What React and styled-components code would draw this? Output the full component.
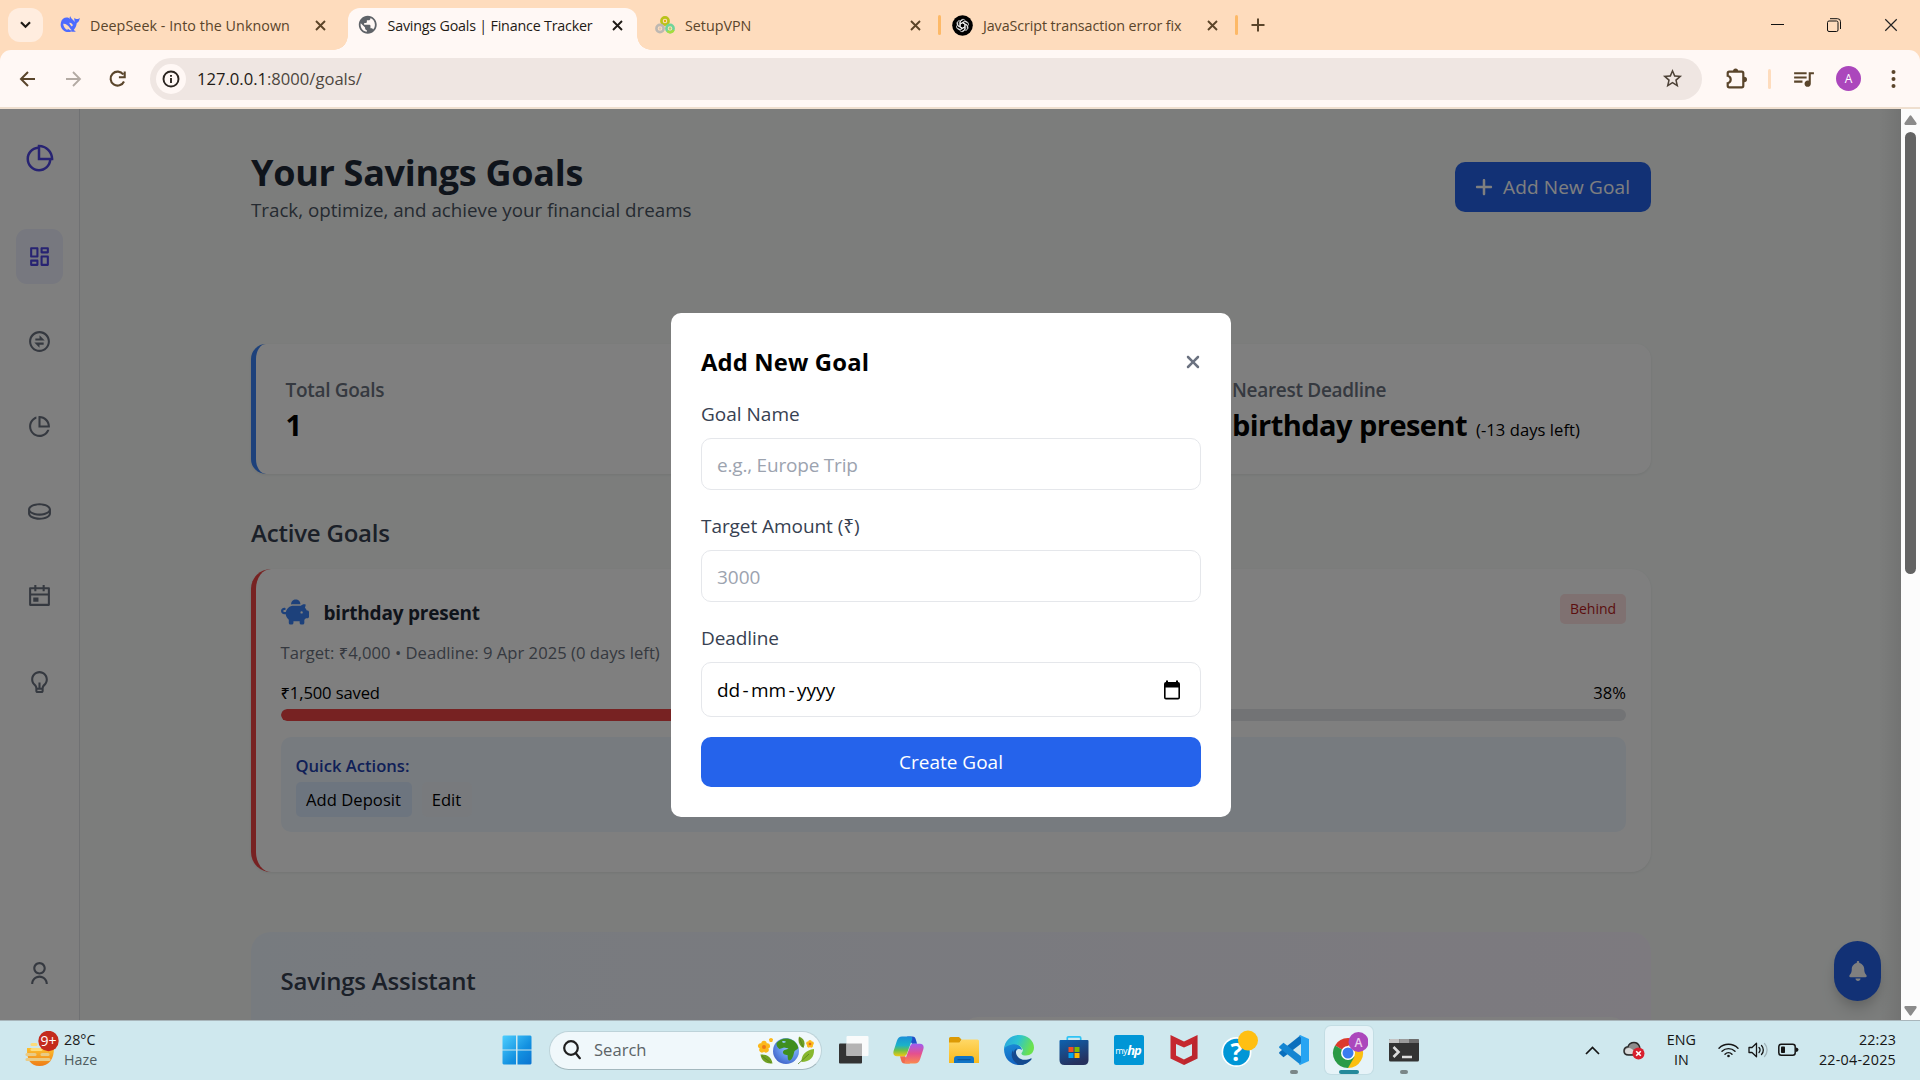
import React from "react";
import styled, { createGlobalStyle } from "styled-components";
import {
  RiPieChart2Line, RiDashboardLine, RiExchangeLine, RiPieChartLine,
  RiCoinLine, RiCalendarEventLine, RiLightbulbLine, RiUserLine,
} from "react-icons/ri";
import { FaPiggyBank, FaPlus, FaXmark, FaBell } from "react-icons/fa6";
import { MdQueueMusic, MdStarBorder, MdPublic } from "react-icons/md";

const Global = createGlobalStyle`
  * { box-sizing: border-box; }
  body { margin: 0; background: #fff; }
  body, button { font-family: "Open Sans", "Noto Sans", sans-serif; }
  button { border: 0; background: none; padding: 0; margin: 0; }
  svg { display: block; flex: none; }
`;

/* ---------- shared ---------- */

const Text = styled.span`
  display: block;
  flex: none;
  white-space: nowrap;
  font-size: ${(p) => p.$size || 19}px;
  line-height: ${(p) => p.$line || 30}px;
  font-weight: ${(p) => p.$weight || 400};
  letter-spacing: ${(p) => p.$track || 0}px;
  color: ${(p) => p.$color || "#000"};
`;

const Screen = styled.div`
  width: 1920px;
  height: 1080px;
  overflow: hidden;
  display: flex;
  flex-direction: column;
`;

/* ---------- browser chrome ---------- */

const TabStrip = styled.div`
  height: 50px;
  flex: none;
  background: #fedcbd;
  display: flex;
  align-items: flex-start;
  padding-left: 8px;
`;

const TabSearch = styled.button`
  width: 35px;
  height: 34px;
  margin: 8px 5px 0 0;
  border-radius: 12px;
  background: #ffeddf;
  display: grid;
  place-items: center;
`;

const Tab = styled.div`
  width: ${(p) => p.$w}px;
  height: 42px;
  margin-top: 8px;
  padding: 0 ${(p) => p.$pr || 12}px 8px ${(p) => p.$pl || 12}px;
  display: flex;
  align-items: center;
  gap: ${(p) => p.$gap || 10}px;
  position: relative;
  border-radius: 12px 12px 0 0;
  background: ${(p) => (p.$active ? "#fff8f5" : "transparent")};
  ${(p) => p.$active && `
    &::before, &::after {
      content: "";
      position: absolute;
      bottom: 0;
      width: 14px;
      height: 14px;
    }
    &::before {
      left: -14px;
      background: radial-gradient(circle at 0 0, transparent 13.5px, #fff8f5 14px);
    }
    &::after {
      right: -14px;
      background: radial-gradient(circle at 100% 0, transparent 13.5px, #fff8f5 14px);
    }
  `}
`;

const TabTitle = styled(Text)`
  flex: 1;
  padding-top: 1px;
`;

const TabDivider = styled.div`
  width: 3px;
  height: 20px;
  margin-top: 15px;
  border-radius: 2px;
  background: #fdb967;
`;

const NewTab = styled.button`
  margin: 18px 0 0 13px;
`;

const WindowControls = styled.div`
  margin-left: auto;
  height: 50px;
  display: flex;
  align-items: center;
  padding-right: 1px;
`;

const WindowButton = styled.button`
  width: 56.5px;
  height: 50px;
  display: grid;
  place-items: center;
`;

const ToolbarBack = styled.div`
  background: #fedcbd;
  flex: none;
`;

const Toolbar = styled.div`
  height: 59px;
  background: #fff8f5;
  border-bottom: 2px solid #efdfcf;
  border-radius: 11px 11px 0 0;
  display: flex;
  align-items: center;
  padding: 0 23px 0 18px;
`;

const NavButtons = styled.div`
  display: flex;
  gap: 25px;
  width: 132px;
`;

const AddressBar = styled.div`
  width: 1552px;
  height: 42px;
  border-radius: 21px;
  background: #efe6e2;
  display: flex;
  align-items: center;
  padding: 0 18px 0 6px;
`;

const SiteInfo = styled.div`
  width: 30px;
  height: 30px;
  margin-right: 11px;
  border-radius: 50%;
  background: #fff8f5;
  display: grid;
  place-items: center;
`;

const AddressText = styled(Text)`
  flex: 1;
  padding-top: 1px;
`;

const ToolbarActions = styled.div`
  flex: 1;
  display: flex;
  align-items: center;
  gap: 20px;
  padding-left: 24px;
`;

const ActionDivider = styled.div`
  width: 3px;
  height: 20px;
  border-radius: 2px;
  background: #fedcbd;
`;

const Avatar = styled.div`
  width: 25px;
  height: 25px;
  border-radius: 50%;
  background: #ab47bc;
  display: grid;
  place-items: center;
`;

const MenuDots = styled.div`
  margin-left: 10px;
`;

/* ---------- page ---------- */

const Viewport = styled.div`
  height: 911px;
  flex: none;
  display: flex;
  position: relative;
  overflow: hidden;
`;

const Sidebar = styled.nav`
  width: 80px;
  background: #fff;
  border-right: 1px solid #e0e3e6;
  display: flex;
  flex-direction: column;
  align-items: center;
  padding: 35px 0 19px;
`;

const Logo = styled.div`
  color: #4f46e5;
  margin: 0 1px 55px 0;
`;

const NavList = styled.div`
  flex: 1;
  display: flex;
  flex-direction: column;
  gap: 30px;
`;

const NavItem = styled.div`
  width: 47px;
  height: 55px;
  border-radius: 11px;
  display: grid;
  place-items: center;
  color: ${(p) => (p.$active ? "#4f46e5" : "#6b7280")};
  background: ${(p) => (p.$active ? "#eef1ff" : "transparent")};
`;

const Main = styled.main`
  flex: 1;
  background: #f8fbf9;
  padding: 42px 250px 0 171px;
  overflow: hidden;
`;

const PageHeader = styled.header`
  height: 74px;
  display: flex;
  justify-content: space-between;
  align-items: flex-start;
`;

const PageTitle = styled(Text)`
  margin: 0;
`;

const AddGoalButton = styled.button`
  width: 196px;
  height: 50px;
  margin-top: 11px;
  border-radius: 10px;
  background: #2563eb;
  color: #fff;
  display: flex;
  align-items: center;
  gap: 9px;
  padding-left: 19px;
`;

const Stats = styled.section`
  height: 130px;
  margin-top: 119px;
  background: #fff;
  border-left: 5px solid #3b82f6;
  border-radius: 15px;
  box-shadow: 0 1px 3px rgba(0, 0, 0, 0.08);
  padding: 31px 30px 0 29.5px;
  display: grid;
  grid-template-columns: 946.5px 1fr;
`;

const StatValue = styled.div`
  display: flex;
  align-items: baseline;
  gap: 9px;
`;

const SectionTitle = styled(Text)`
  margin: 40px 0 17px;
`;

const GoalCard = styled.section`
  height: 303px;
  background: #fff;
  border-left: 5px solid #ef4444;
  border-radius: 20px;
  box-shadow: 0 1px 3px rgba(0, 0, 0, 0.08);
  padding: 25px 25px 0 24.5px;
`;

const GoalHead = styled.div`
  height: 46px;
  display: flex;
  justify-content: space-between;
  align-items: flex-start;
`;

const GoalName = styled.div`
  height: 37px;
  display: flex;
  align-items: center;
  gap: 15px;
  color: #3b82f6;
`;

const PigIcon = styled(FaPiggyBank)`
  margin-bottom: 2px;
`;

const Badge = styled.div`
  width: 66px;
  height: 30px;
  border-radius: 5px;
  background: #fee2e2;
  display: grid;
  place-items: center;
`;

const ProgressLabels = styled.div`
  display: flex;
  justify-content: space-between;
  margin-top: 14.5px;
`;

const Track = styled.div`
  height: 12.5px;
  margin-top: 4px;
  border-radius: 7px;
  background: #e5e7eb;
  overflow: hidden;
`;

const Fill = styled.div`
  height: 100%;
  border-radius: 7px;
  background: #ef4444;
`;

const QuickActions = styled.div`
  height: 95px;
  margin-top: 15.5px;
  border-radius: 10px;
  background: #eff6ff;
  padding: 16px 15px;
`;

const ActionRow = styled.div`
  display: flex;
  gap: 10px;
  margin-top: 4px;
`;

const ActionButton = styled.button`
  height: 35px;
  border-radius: 5px;
  padding: 0 9px;
  min-width: ${(p) => p.$w}px;
  background: ${(p) => p.$bg};
  display: flex;
  align-items: center;
  justify-content: center;
`;

const Assistant = styled.section`
  margin-top: 60px;
  border-radius: 20px;
  background: linear-gradient(to right, #eff6ff, #faf5ff);
  padding: 33px 25px 0 29.5px;
`;

const AssistantGrid = styled.div`
  display: grid;
  grid-template-columns: 1fr 663px;
  margin-top: 21px;
`;

const AssistantPanel = styled.div`
  grid-column: 2;
  height: 200px;
  border-radius: 15px;
  background: #fff;
`;

const NotifyButton = styled.button`
  position: absolute;
  left: 1834px;
  top: 832px;
  width: 47px;
  height: 60px;
  border-radius: 24px;
  background: #2563eb;
  color: #fff;
  box-shadow: 0 12px 18px -4px rgba(0, 0, 0, 0.16), 0 4px 8px rgba(0, 0, 0, 0.08);
  display: grid;
  place-items: center;
`;

const Overlay = styled.div`
  position: absolute;
  inset: 0 19px 0 0;
  background: linear-gradient(to left, rgba(0, 0, 0, 0.08), transparent 22px), rgba(0, 0, 0, 0.5);
  display: flex;
  align-items: center;
  justify-content: center;
`;

const Modal = styled.div`
  width: 560px;
  height: 504px;
  margin-left: 1px;
  background: #fff;
  border-radius: 10px;
  padding: 30px;
`;

const ModalHead = styled.div`
  height: 37px;
  display: flex;
  justify-content: space-between;
  align-items: center;
  margin: 1px -2px 18px 0;
  color: #6b7280;
`;

const Field = styled.label`
  display: block;
  margin-bottom: ${(p) => p.$mb || 21}px;
`;

const InputBox = styled.div`
  height: ${(p) => p.$h || 52}px;
  margin-top: 9px;
  border: 1px solid #e5e7eb;
  border-radius: 10px;
  padding: 2px 20px 0 15px;
  display: flex;
  align-items: center;
  justify-content: space-between;
`;

const DateSeparator = styled.span`
  margin: 0 2.3px;
`;

const SubmitButton = styled.button`
  width: 100%;
  height: 50px;
  border-radius: 10px;
  background: #2563eb;
  display: grid;
  place-items: center;
  padding-top: 1px;
`;

const Scrollbar = styled.div`
  width: 19px;
  background: #fcfcfc;
  display: flex;
  flex-direction: column;
  align-items: center;
  padding: 6px 0 4px;
`;

const ScrollThumb = styled.div`
  width: 11px;
  height: 442px;
  margin: 7px 0 auto;
  border-radius: 6px;
  background: #636363;
`;

/* ---------- taskbar ---------- */

const Taskbar = styled.div`
  height: 60px;
  flex: none;
  border-top: 1px solid #a9b6bb;
  background: #cfe8ee;
  display: flex;
  align-items: center;
  padding-bottom: 1px;
`;

const Weather = styled.div`
  width: 489px;
  display: flex;
  align-items: center;
  padding-left: 24px;
  gap: 3px;
`;

const Lines = styled.div`
  display: flex;
  flex-direction: column;
  align-items: ${(p) => p.$align || "flex-start"};
`;

const TaskSlot = styled.div`
  width: 55px;
  height: 58px;
  display: grid;
  place-items: center;
  position: relative;
`;

const ActiveSlot = styled.div`
  width: 48px;
  height: 48px;
  border-radius: 6px;
  background: #e6f3f8;
  box-shadow: 0 0 0 1px rgba(150, 180, 190, 0.2);
  display: grid;
  place-items: center;
`;

const Indicator = styled.div`
  position: absolute;
  bottom: 5px;
  left: 50%;
  width: ${(p) => (p.$active ? 20 : 8)}px;
  height: 4px;
  border-radius: 2px;
  transform: translateX(-50%);
  background: ${(p) => (p.$active ? "#25899a" : "#7a8688")};
`;

const SearchPill = styled.div`
  width: 273px;
  height: 39px;
  margin: 0 4px 0 5px;
  border-radius: 20px;
  background: #f0f8fb;
  border: 1px solid #bdd3d9;
  border-bottom-color: #a3b8be;
  display: flex;
  align-items: center;
  padding: 0 6px 0 13px;
`;

const SearchLabel = styled(Text)`
  flex: 1;
  margin-left: 13px;
`;

const HpTile = styled.div`
  width: 30px;
  height: 30px;
  border-radius: 2px;
  background: #0096d6;
  color: #fff;
  display: flex;
  align-items: center;
  justify-content: center;
  font-size: 9px;
  letter-spacing: -0.4px;
  b { font-size: 13px; font-style: italic; letter-spacing: -1px; padding-right: 1px; }
`;

const Tray = styled.div`
  margin-left: auto;
  height: 58px;
  display: flex;
  align-items: center;
  padding-right: 24px;
`;

const TrayItem = styled.div`
  margin-right: ${(p) => p.$mr}px;
`;

/* ---------- drawings ---------- */

const Cross = ({ size = 11, color = "#5b4428", width = 1.9 }) => (
  <svg width={size} height={size} viewBox="0 0 11 11" fill="none" stroke={color} strokeWidth={width}>
    <path d="M1 1l9 9M10 1l-9 9" />
  </svg>
);

const Whale = () => (
  <svg width="20" height="18" viewBox="0 0 20 18">
    <path fill="#4d6bfe" d="M1 6.2C1.6 3 4.6 1 7.6 1.500c1 .2 1.500.8 2.600 1.700C9 1.800 9.900.5 10.500.2c.2 1.800 1.300 2.500 2.300 3.600 1.200 1.300 1.700 2 2.400 1.900-1-1.100-1-2.400-.8-4 .8 1.200 2 1.500 3 1.400 1 0 1.600-.5 2.300-1-.1 2.600-1.200 4.200-3 5.200-.3 3-1.400 5-3 6.700.7.600 1.600.9 2.200 1.200-1.400.8-3 .7-4.600.2C7 17.500 2.200 14.700.9 10.500.5 9 .7 7.500 1 6.200z" />
    <path fill="#fedcbd" d="M3.200 7.800c2.600-.2 5.200 1.600 6.500 4 .6 1 1.200 1.900 2.200 2.400-1.700.3-3-.5-4-1.500l-.6 1.300C5 13 3.400 10.600 3.200 7.800zM9.300 6.900c1.500-.3 3 .7 3.600 2.300l-1.100 1.300C10.700 9.600 10 8.200 9.300 6.900z" />
  </svg>
);

const Puzzle = ({ color }) => (
  <svg width="22" height="22" viewBox="0 0 22 22">
    <path fill="none" stroke={color} strokeWidth="2.200" d="M3.200 3.700h12.600q1.500 0 1.500 1.500v12.600q0 1.500-1.500 1.500H3.200q-1.500 0-1.500-1.500v-2.600q3-.8 3-3.700t-3-3.700V5.200q0-1.500 1.500-1.500z" />
    <path fill={color} d="M7 3.500a2.600 3 0 0 1 5.200 0zM18 8.800a3 2.700 0 0 1 0 5.400z" />
  </svg>
);

const Rings = () => (
  <svg width="20" height="18" viewBox="0 0 20 18" fill="none" strokeWidth="2.600">
    <circle cx="10" cy="5" r="3.600" stroke="#b9c31a" />
    <circle cx="15" cy="12.500" r="3.600" stroke="#6fd49a" />
    <path d="M12.500 15a3.600 3.600 0 0 0 6-1" stroke="#a4dd3c" />
    <circle cx="5" cy="12.500" r="3.600" stroke="#bdb8b2" />
    <circle cx="10" cy="5" r="1.200" fill="#e0b400" stroke="none" />
    <circle cx="5" cy="12.500" r="1.200" fill="#d8c6b4" stroke="none" />
    <circle cx="15" cy="12.500" r="1.200" fill="#a6d86b" stroke="none" />
  </svg>
);

const Knot = () => (
  <svg width="21" height="21" viewBox="0 0 21 21">
    <circle cx="10.500" cy="10.500" r="10.300" fill="#000" />
    <g fill="none" stroke="#fff" strokeWidth=".8">
      {[0, 60, 120, 180, 240, 300].map((a) => (
        <path key={a} transform={`rotate(${a} 10.500 10.500)`} d="M8.300 11.700V7c0-2.700 3.500-3.600 5-1.400M8.300 8.700l4.300-2.500 3 1.700" />
      ))}
    </g>
  </svg>
);

const Haze = () => (
  <svg width="37" height="38" viewBox="0 0 37 38">
    <defs>
      <linearGradient id="sun" x1="0" y1="0" x2="0" y2="1">
        <stop offset="0" stopColor="#fcc02f" /><stop offset="1" stopColor="#ef7d16" />
      </linearGradient>
    </defs>
    <path fill="url(#sun)" d="M3 17h27c0 11-5 18-14.500 18S3 28 3 19z" />
    <g strokeLinecap="round" strokeWidth="3.200">
      <path stroke="#fddc7a" d="M8 13.500h4M8 18.500h9" />
      <path stroke="#e9cb86" d="M3 23.500h8M18 23.500h6M3 28.500h22" />
    </g>
    <circle cx="24.500" cy="10" r="10.200" fill="#c42b1c" />
    <text x="24.500" y="15" textAnchor="middle" fontSize="14" fill="#fff" fontFamily="Open Sans">9+</text>
  </svg>
);

const WindowsLogo = () => (
  <svg width="30" height="30" viewBox="0 0 30 30">
    <defs>
      <linearGradient id="win" gradientUnits="userSpaceOnUse" x1="0" y1="0" x2="30" y2="30">
        <stop offset="0" stopColor="#4fd0ff" /><stop offset=".6" stopColor="#1290e0" /><stop offset="1" stopColor="#0a72d0" />
      </linearGradient>
    </defs>
    <path fill="url(#win)" d="M1.500.5H14v14H.5v-13zM15.500.5h13l1 1v13h-14zM.5 15.500H14v14H1.500l-1-1zM15.500 15.500h14v13l-1 1h-13z" />
  </svg>
);

const EarthFlowers = () => (
  <svg width="58" height="30" viewBox="0 0 58 30">
    <defs>
      <radialGradient id="sea" cx=".65" cy=".3" r=".8">
        <stop offset="0" stopColor="#9fd0ff" /><stop offset=".6" stopColor="#5f8fe8" /><stop offset="1" stopColor="#3d5fc4" />
      </radialGradient>
    </defs>
    <circle cx="29" cy="16" r="13" fill="url(#sea)" />
    <path fill="#3f8f1e" d="M19.500 8c3-3.500 8-5.500 13-4 4.500 1 8 4.500 8.800 9-1 2-2.800 1.500-4 3.500l-1 4c-.8 2.500-2.300 5-4 5-1.800-.5-1.300-3-1.800-5.500-2.500 0-5-1-4.500-3.500 1-2 3.500-1.800 5.500-2.700-1-1.300-3-.5-4.500-1.300L22.500 14c-1.500-1.300-3.500-3-3-6z" />
    <path fill="#8fc8f5" d="M25 6.500c1.500-.8 3-.6 4 .3-1 1.600-3.500 1.600-4-.3z" />
    <g fill="#fcb91c">
      {[0, 72, 144, 216, 288].map((a) => (
        <g key={a}>
          <circle transform={`rotate(${a} 7 12)`} cx="7" cy="8.500" r="2.700" />
          <circle transform={`rotate(${a} 53 9)`} cx="53" cy="6.800" r="1.800" />
          <circle transform={`rotate(${a} 14 5)`} cx="14" cy="4" r="1.100" />
        </g>
      ))}
    </g>
    <circle cx="7" cy="12" r="2" fill="#ee7b16" />
    <circle cx="53" cy="9" r="1.300" fill="#e0661c" />
    <path fill="#6fa024" d="M3.500 19.500c6-.5 11 2 12 9-6 .5-11-2-12-9zM42 1.500c5 2 7 6 4.500 11.500-4-2-6-6-4.500-11.500z" />
    <path fill="#87b82e" d="M57 14c.5 8-4 13-12.500 13C44 20 49 15 57 14z" />
    <path stroke="#55801c" strokeWidth=".8" fill="none" d="M41 29l11-10M5 21l9 7M42.500 3l3.500 9" />
  </svg>
);

const TaskView = () => (
  <svg width="30" height="30" viewBox="0 0 30 30">
    <rect x="0" y="8.500" width="23" height="20" rx="1" fill="#333" />
    <rect x="7.500" y="1" width="22" height="20" rx="1" fill="#f9fbfb" />
    <path d="M7.500 8.500H23V21H7.500z" fill="#b4b4b4" />
  </svg>
);

const Copilot = () => (
  <svg width="31" height="28" viewBox="0 0 31 28">
    <defs>
      <linearGradient id="cpA" x1="0" y1="0" x2="0" y2="1">
        <stop offset="0" stopColor="#1a8fd8" /><stop offset=".45" stopColor="#1bb2c9" /><stop offset=".7" stopColor="#6cc04a" /><stop offset="1" stopColor="#f2c811" />
      </linearGradient>
      <linearGradient id="cpB" x1="0" y1="0" x2="0" y2="1">
        <stop offset="0" stopColor="#a15cf0" /><stop offset=".5" stopColor="#e5508e" /><stop offset="1" stopColor="#fb8a4e" />
      </linearGradient>
    </defs>
    <path fill="#1f4fc9" d="M14 .5h5.500c2 0 2.800 1.300 3.300 3l1.300 4.300h-5z" />
    <path fill="#f06a4d" d="M17 27.500h-5.500c-2 0-2.800-1.300-3.300-3L7 20.200h5z" />
    <path fill="url(#cpA)" d="M9 .5h8.500c1.800 0 2 1.500 1.600 3L14 17.500c-.7 2-1.700 2.700-3.600 2.700H4C1 20.200-.2 18 .6 15L4 4.500C5 1.700 6.500.5 9 .5z" />
    <path fill="url(#cpB)" d="M22 27.500h-8.500c-1.800 0-2-1.500-1.600-3L17 10.500c.7-2 1.700-2.700 3.600-2.700H27c3 0 4.200 2.200 3.400 5.200L27 23.500c-1 2.800-2.500 4-5 4z" />
  </svg>
);

const Explorer = () => (
  <svg width="30" height="28" viewBox="0 0 30 28">
    <defs>
      <linearGradient id="fold" x1="0" y1="0" x2="0" y2="1">
        <stop offset="0" stopColor="#ffd866" /><stop offset="1" stopColor="#f9b91c" />
      </linearGradient>
    </defs>
    <path fill="#dc9a05" d="M0 2.500Q0 1 1.500 1H10l2.500 2.500L10 8H0z" />
    <path fill="url(#fold)" d="M0 6.500h10.500L13 3.500h15.500Q30 3.500 30 5v22H0z" />
    <path fill="#1074c6" d="M5 27v-4q0-3 3-3h14q3 0 3 3v4z" />
    <path stroke="#0a559b" strokeWidth="1.200" d="M8.500 23.700h13" />
  </svg>
);

const Edge = () => (
  <svg width="30" height="30" viewBox="0 0 30 30">
    <defs>
      <linearGradient id="edA" x1="0" y1="0" x2="1" y2=".3">
        <stop offset="0" stopColor="#2aa0e0" /><stop offset=".5" stopColor="#2cc3d2" /><stop offset="1" stopColor="#6be24e" />
      </linearGradient>
      <linearGradient id="edB" x1="0" y1="0" x2=".3" y2="1">
        <stop offset="0" stopColor="#1b8fd8" /><stop offset="1" stopColor="#1262c0" />
      </linearGradient>
    </defs>
    <path fill="url(#edB)" d="M0 14C.5 10 4 8 8 8c6 0 10 4 10 7-2.500-2-6-1-6.500 2.500-.5 4.500 3.500 8.500 9 8.500 3 0 5-.8 6.800-1.800C24.700 28 20.500 30 15 30 6.500 30 0 23.500 0 14z" />
    <path fill="url(#edA)" d="M0 14C.5 6 7 0 15 0c9 0 15 6 15 12.500 0 5-3.500 8-8 8-3.500 0-5-1.300-4.500-2.500C19 16.500 19 15 18.500 14 17 10.500 12 8.500 8 9.500 4 10.300 1 12 0 14z" />
    <path fill="#144a8f" d="M13 13.200c-4 2.300-4.500 6-2.700 9C12.500 26 17 28 21 27.500c3-.3 5.300-1.600 6.800-3.500l-.6-.8C22.500 25.500 17 25.500 14 22c-2.300-2.700-2.700-5.800-1-8.800z" />
    <path fill="#144a8f" d="M9 15c-3 5-1 11 6 15 5.500 0 9.500-2 12-5.500C20 28.500 9.500 25 9 15z" />
  </svg>
);

const Store = () => (
  <svg width="30" height="30" viewBox="0 0 30 30">
    <defs>
      <linearGradient id="bag" x1="0" y1="0" x2=".4" y2="1">
        <stop offset="0" stopColor="#0d62b0" /><stop offset="1" stopColor="#26315e" />
      </linearGradient>
    </defs>
    <path fill="none" stroke="#2fc3f5" strokeWidth="1.700" d="M8.300 6.500V3q0-1.200 1.200-1.200h11q1.200 0 1.200 1.200v3.500" />
    <path fill="url(#bag)" d="M.5 6q0-1 1-1h27q1 0 1 1v19q0 5-5 5h-19q-5 0-5-5z" />
    <path fill="#f25022" d="M9.500 12H14.500v5h-5z" /><path fill="#7fba00" d="M15.500 12h5v5h-5z" />
    <path fill="#00a4ef" d="M9.500 18h5v5h-5z" /><path fill="#ffb900" d="M15.500 18h5v5h-5z" />
  </svg>
);

const McAfee = () => (
  <svg width="28" height="30" viewBox="0 0 28 30">
    <path fill="#c5282f" d="M.5 0L14 6.500 27.500 0v23.500L14 30 .5 23.500z" />
    <path fill="#cfe8ee" d="M6 9l8 3.500L22 9v11.500L14 24.500 6 20.500z" />
    <path fill="#a51f26" d="M14 24.500v5.500l13.500-6.500V0L22 9v11.500z" opacity=".25" />
  </svg>
);

const HelpBubble = () => (
  <svg width="40" height="40" viewBox="0 0 40 40">
    <circle cx="17.500" cy="22" r="15" fill="#fff" />
    <circle cx="17.500" cy="22" r="13.300" fill="#0096d6" />
    <text x="17.500" y="31" textAnchor="middle" fontSize="25" fontWeight="700" fill="#fff" fontFamily="Open Sans">?</text>
    <circle cx="29" cy="10.500" r="10" fill="#ffbf12" />
  </svg>
);

const Code = () => (
  <svg width="30" height="30" viewBox="0 0 30 30">
    <path fill="#0a6fbd" d="M21.500.3L23 8 4.500 22.200l-4-3.400q-.8-1 0-1.800z" />
    <path fill="#1485d2" d="M21.500 29.700L23 22 4.500 7.800l-4 3.400q-.8 1 0 1.800z" />
    <path fill="#27a4f2" d="M21.500.3L30 4v22l-8.500 3.700q-1 .3-1.500-.8l2.500-1.500v-25L20 1q.5-1 1.500-.7z" />
    <path fill="#27a4f2" d="M22 1h1v28h-1z" />
  </svg>
);

const ChromeLogo = () => (
  <svg width="38" height="36" viewBox="0 0 38 36">
    <path fill="#dc3a2c" d="M18 21L5 13.500A15 15 0 0 1 31 13.500H18z" />
    <path fill="#fbbf10" d="M18 21l0 15a15 15 0 0 0 13-22.500H18z" />
    <path fill="#2a9a46" d="M18 21L5 13.500A15 15 0 0 0 18 36l6.500-11.200z" />
    <circle cx="18" cy="21" r="7" fill="#fff" />
    <circle cx="18" cy="21" r="5.500" fill="#3a7cf0" />
    <circle cx="28.500" cy="10" r="10" fill="#ab47bc" />
    <text x="28.500" y="14.500" textAnchor="middle" fontSize="12" fontWeight="600" fill="#ead0ef" fontFamily="Open Sans">A</text>
  </svg>
);

const Terminal = () => (
  <svg width="30" height="23" viewBox="0 0 30 23">
    <rect width="30" height="22.500" rx="1.500" fill="#333" />
    <path fill="#c4c4c4" d="M1 0h9.500v4H0V1z" /><path fill="#9a9a9a" d="M10.500 0H20v4h-9.500z" /><path fill="#6d6d6d" d="M20 0h9l1 1v3H20z" />
    <path fill="none" stroke="#dcdcdc" strokeWidth="2.600" d="M4.500 8l5 5-5 5M13 18h10" />
  </svg>
);

const Cloud = () => (
  <svg width="22" height="20" viewBox="0 0 22 20">
    <path fill="#8c8c8c" stroke="#2b2b2b" strokeWidth="1.500" d="M5.500 15C2.500 15 1 13 1 11s1.500-4 4-4.200C6 3.500 8.500 2.500 11 2.500s4.500 1.500 5.500 4l1 6-4 2.500z" />
    <path fill="#d9d9d9" d="M5.500 14C3 14 2 12.500 2 11s1.500-3 4-3c2 0 3 1 4 2l4 4z" />
    <circle cx="15.500" cy="13.500" r="6" fill="#d8202e" />
    <path stroke="#fff" strokeWidth="1.600" d="M13.200 11.200l4.600 4.600M17.800 11.200l-4.600 4.600" />
  </svg>
);

const Wifi = () => (
  <svg width="21" height="16" viewBox="0 0 21 16" fill="none" stroke="#151515" strokeWidth="1.400" strokeLinecap="round">
    <path d="M1 6.200a13.500 13.500 0 0 1 19 0M4 9.300a9.300 9.300 0 0 1 13 0M7 12.200a5 5 0 0 1 7 0" />
    <circle cx="10.500" cy="14" r="1.300" fill="#151515" stroke="none" />
  </svg>
);

const Speaker = () => (
  <svg width="21" height="16" viewBox="0 0 21 16" fill="none" stroke="#151515" strokeWidth="1.300" strokeLinecap="round" strokeLinejoin="round">
    <path d="M1 5.500h3L8.500 1.200v13.600L4 10.500H1z" />
    <path d="M11 5.500a3.500 3.500 0 0 1 0 5M13.500 3.500a6.500 6.500 0 0 1 0 9" />
    <path stroke="#a3b5ba" d="M16.500 1.500a9.500 9.500 0 0 1 0 13" />
  </svg>
);

const Battery = () => (
  <svg width="21" height="14" viewBox="0 0 21 14">
    <rect x=".8" y="1.300" width="16.400" height="11" rx="2.500" fill="none" stroke="#151515" strokeWidth="1.500" />
    <rect x="3" y="3.500" width="4" height="6.600" rx=".8" fill="#151515" />
    <path fill="#151515" d="M18 4.500q2.500.5 2.500 2.300T18 9.100z" />
  </svg>
);

const CalendarGlyph = () => (
  <svg width="16" height="20" viewBox="0 0 16 20">
    <path fill="#000" d="M2 2V.5h2V2h8V.5h2V2q2 0 2 2v13.500q0 2-2 2H2q-2 0-2-2V4q0-2 2-2zm-.4 5.500v10.300h12.800V7.500z" />
  </svg>
);

/* ---------- sections ---------- */

const tabColor = "#5a452b";

function Browser() {
  return (
    <>
      <TabStrip>
        <TabSearch>
          <svg width="11" height="8" viewBox="0 0 11 8" fill="none" stroke="#1f1b16" strokeWidth="2.200"><path d="M1 1.300l4.500 4.500L10 1.300" /></svg>
        </TabSearch>
        <Tab $w={300} $pl={12} $pr={22.5}>
          <Whale />
          <TabTitle $size={14.3} $line={22} $track={0.06} $color={tabColor}>DeepSeek - Into the Unknown</TabTitle>
          <Cross />
        </Tab>
        <Tab $w={289} $active $pl={8.5} $pr={14} $gap={9.5}>
          <MdPublic size={21.5} color="#5f6368" />
          <TabTitle $size={14.3} $line={22} $track={-0.2} $color="#1f1b16">Savings Goals | Finance Tracker</TabTitle>
          <Cross color="#1f1b16" />
        </Tab>
        <Tab $w={301} $pl={18} $pr={17.5}>
          <Rings />
          <TabTitle $size={14.3} $line={22} $color={tabColor}>SetupVPN</TabTitle>
          <Cross />
        </Tab>
        <TabDivider />
        <Tab $w={294} $pl={11} $pr={17.5}>
          <Knot />
          <TabTitle $size={14.3} $line={22} $track={-0.09} $color={tabColor}>JavaScript transaction error fix</TabTitle>
          <Cross />
        </Tab>
        <TabDivider />
        <NewTab>
          <svg width="14" height="14" viewBox="0 0 14 14" stroke={tabColor} strokeWidth="2"><path d="M7 .5v13M.5 7h13" /></svg>
        </NewTab>
        <WindowControls>
          <WindowButton><svg width="13" height="13" viewBox="0 0 13 13" stroke="#111"><path d="M0 5.500h13" /></svg></WindowButton>
          <WindowButton>
            <svg width="14" height="14" viewBox="0 0 14 14" fill="none" stroke="#111">
              <rect x=".5" y="3" width="10.500" height="10.500" rx="1.500" />
              <path d="M3 .7h7.500q3 0 3 3V11" />
            </svg>
          </WindowButton>
          <WindowButton><Cross size={14} color="#222" width={0.9} /></WindowButton>
        </WindowControls>
      </TabStrip>
      <ToolbarBack>
        <Toolbar>
          <NavButtons>
            <svg width="20" height="20" viewBox="0 0 20 20" fill="none" stroke={tabColor} strokeWidth="2"><path d="M17 10H3M10 3l-7 7 7 7" /></svg>
            <svg width="20" height="20" viewBox="0 0 20 20" fill="none" stroke="#b3aaa3" strokeWidth="1.800"><path d="M3 10h14M10 3l7 7-7 7" /></svg>
            <svg width="20" height="20" viewBox="0 0 20 20" fill="none" stroke={tabColor} strokeWidth="2.100"><path d="M16 12.500A7 7 0 1 1 15.300 5.500M16.700 2.500v5.700h-5.800" /></svg>
          </NavButtons>
          <AddressBar>
            <SiteInfo>
              <svg width="18" height="18" viewBox="0 0 18 18" fill="none" stroke="#2b2520" strokeWidth="1.900"><circle cx="9" cy="9" r="7.500" /><path d="M9 8v5M9 5v1.800" /></svg>
            </SiteInfo>
            <AddressText $size={16.6} $line={24} $color="#4d4640"><span style={{ color: "#1f1b16" }}>127.0.0.1</span>:8000/goals/</AddressText>
            <MdStarBorder size={23} color="#4d4237" />
          </AddressBar>
          <ToolbarActions>
            <Puzzle color={tabColor} />
            <ActionDivider />
            <MdQueueMusic size={25} color={tabColor} />
            <Avatar><Text $size={12} $line={16} $color="#fff">A</Text></Avatar>
            <MenuDots>
              <svg width="5" height="20" viewBox="0 0 5 20" fill={tabColor}><circle cx="2.500" cy="3" r="2" /><circle cx="2.500" cy="10" r="2" /><circle cx="2.500" cy="17" r="2" /></svg>
            </MenuDots>
          </ToolbarActions>
        </Toolbar>
      </ToolbarBack>
    </>
  );
}

const navIcons = [RiDashboardLine, RiExchangeLine, RiPieChartLine, RiCoinLine, RiCalendarEventLine, RiLightbulbLine];

function Page() {
  return (
    <Viewport>
      <Sidebar>
        <Logo><RiPieChart2Line size={30} /></Logo>
        <NavList>
          {navIcons.map((Icon, i) => (
            <NavItem key={i} $active={i === 0}><Icon size={25} /></NavItem>
          ))}
        </NavList>
        <NavItem><RiUserLine size={25} /></NavItem>
      </Sidebar>
      <Main>
        <PageHeader>
          <div>
            <PageTitle as="h1" $size={36} $line={44} $track={-0.3} $weight={700} $color="#1f2937">Your Savings Goals</PageTitle>
            <Text $size={18.8} $track={-0.02} $color="#4b5563">Track, optimize, and achieve your financial dreams</Text>
          </div>
          <AddGoalButton><FaPlus size={20} /><Text $track={0.15} $color="#fff">Add New Goal</Text></AddGoalButton>
        </PageHeader>
        <Stats>
          <div>
            <Text $weight={600} $track={-0.3} $color="#6b7280">Total Goals</Text>
            <Text $size={29} $line={40} $weight={700}>1</Text>
          </div>
          <div>
            <Text $weight={600} $track={-0.3} $color="#6b7280">Nearest Deadline</Text>
            <StatValue>
              <Text $size={29} $line={40} $track={-0.55} $weight={700}>birthday present</Text>
              <Text $size={16.6} $line={25} $track={0.04}>(-13 days left)</Text>
            </StatValue>
          </div>
        </Stats>
        <SectionTitle $size={24} $line={38} $track={-0.2} $weight={600} $color="#374151">Active Goals</SectionTitle>
        <GoalCard>
          <GoalHead>
            <GoalName>
              <PigIcon size={28} />
              <Text $weight={700} $track={-0.22} $color="#1f2937">birthday present</Text>
            </GoalName>
            <Badge><Text $size={14} $line={20} $color="#b91c1c">Behind</Text></Badge>
          </GoalHead>
          <Text $size={16.6} $line={25} $track={0.02} $color="#6b7280">Target: ₹4,000 • Deadline: 9 Apr 2025 (0 days left)</Text>
          <ProgressLabels>
            <Text $size={16.6} $line={25} $track={-0.13}>₹1,500 saved</Text>
            <Text $size={16.6} $line={25}>38%</Text>
          </ProgressLabels>
          <Track><Fill style={{ width: "38%" }} /></Track>
          <QuickActions>
            <Text $size={16.6} $line={25} $weight={600} $color="#1e40af">Quick Actions:</Text>
            <ActionRow>
              <ActionButton $w={116} $bg="#dbeafe"><Text $size={16.6} $line={25} $track={0.05}>Add Deposit</Text></ActionButton>
              <ActionButton $w={50} $bg="#f0f5fb"><Text $size={16.6} $line={25}>Edit</Text></ActionButton>
            </ActionRow>
          </QuickActions>
        </GoalCard>
        <Assistant>
          <Text $size={24} $line={31} $track={-0.22} $weight={600} $color="#374151">Savings Assistant</Text>
          <AssistantGrid><AssistantPanel /></AssistantGrid>
        </Assistant>
      </Main>
      <Scrollbar>
        <svg width="13" height="10" viewBox="0 0 13 10"><path fill="#8b8b8b" d="M5.500 1q1-1.500 2 0L12.500 8q.5 1.800-1 2h-10Q0 9.800.5 8z" /></svg>
        <ScrollThumb />
        <svg width="13" height="10" viewBox="0 0 13 10"><path fill="#8b8b8b" d="M5.500 9q1 1.500 2 0L12.500 2q.5-1.800-1-2h-10Q0 .2.500 2z" /></svg>
      </Scrollbar>
      <NotifyButton><FaBell size={20} /></NotifyButton>
      <Overlay>
        <Modal>
          <ModalHead>
            <Text $size={23.8} $line={37} $track={0.15} $weight={700}>Add New Goal</Text>
            <FaXmark size={20} />
          </ModalHead>
          <Field>
            <Text $color="#374151">Goal Name</Text>
            <InputBox><Text $track={-0.2} $color="#9ca3af">e.g., Europe Trip</Text></InputBox>
          </Field>
          <Field>
            <Text $track={-0.06} $color="#374151">Target Amount (₹)</Text>
            <InputBox><Text $color="#9ca3af">3000</Text></InputBox>
          </Field>
          <Field $mb={20}>
            <Text $track={-0.08} $color="#374151">Deadline</Text>
            <InputBox $h={55}>
              <Text>dd<DateSeparator>-</DateSeparator>mm<DateSeparator>-</DateSeparator>yyyy</Text>
              <CalendarGlyph />
            </InputBox>
          </Field>
          <SubmitButton><Text $color="#fff">Create Goal</Text></SubmitButton>
        </Modal>
      </Overlay>
    </Viewport>
  );
}

function WindowsTaskbar() {
  return (
    <Taskbar>
      <Weather>
        <Haze />
        <Lines>
          <Text $size={14.3} $line={20.5} $color="#1b1b1b">28°C</Text>
          <Text $size={14.3} $line={20.5} $color="#4f5d61">Haze</Text>
        </Lines>
      </Weather>
      <TaskSlot><WindowsLogo /></TaskSlot>
      <SearchPill>
        <svg width="18" height="20" viewBox="0 0 18 20" fill="none" stroke="#1f1f1f" strokeWidth="2.200" strokeLinecap="round"><circle cx="8" cy="8" r="6.800" /><path d="M12.800 13.200l4 5" /></svg>
        <SearchLabel $size={16.6} $line={24} $color="#5c6467">Search</SearchLabel>
        <EarthFlowers />
      </SearchPill>
      <TaskSlot><TaskView /></TaskSlot>
      <TaskSlot><Copilot /></TaskSlot>
      <TaskSlot><Explorer /></TaskSlot>
      <TaskSlot><Edge /></TaskSlot>
      <TaskSlot><Store /></TaskSlot>
      <TaskSlot><HpTile>my<b>hp</b></HpTile></TaskSlot>
      <TaskSlot><McAfee /></TaskSlot>
      <TaskSlot><HelpBubble /></TaskSlot>
      <TaskSlot><Code /><Indicator /></TaskSlot>
      <TaskSlot><ActiveSlot><ChromeLogo /></ActiveSlot><Indicator $active /></TaskSlot>
      <TaskSlot><Terminal /><Indicator /></TaskSlot>
      <Tray>
        <TrayItem $mr={23}>
          <svg width="15" height="9" viewBox="0 0 15 9" fill="none" stroke="#151515" strokeWidth="1.700"><path d="M1 8l6.500-6.500L14 8" /></svg>
        </TrayItem>
        <TrayItem $mr={22}><Cloud /></TrayItem>
        <TrayItem $mr={22}>
          <Lines $align="center">
            <Text $size={14.3} $line={20.5} $color="#151515">ENG</Text>
            <Text $size={14.3} $line={20.5} $color="#151515">IN</Text>
          </Lines>
        </TrayItem>
        <TrayItem $mr={9}><Wifi /></TrayItem>
        <TrayItem $mr={9}><Speaker /></TrayItem>
        <TrayItem $mr={20}><Battery /></TrayItem>
        <Lines $align="flex-end">
          <Text $size={14.3} $line={20.5} $track={0.1} $color="#151515">22:23</Text>
          <Text $size={14.3} $line={20.5} $track={0.25} $color="#151515">22-04-2025</Text>
        </Lines>
      </Tray>
    </Taskbar>
  );
}

export default function App() {
  return (
    <Screen>
      <Global />
      <Browser />
      <Page />
      <WindowsTaskbar />
    </Screen>
  );
}
